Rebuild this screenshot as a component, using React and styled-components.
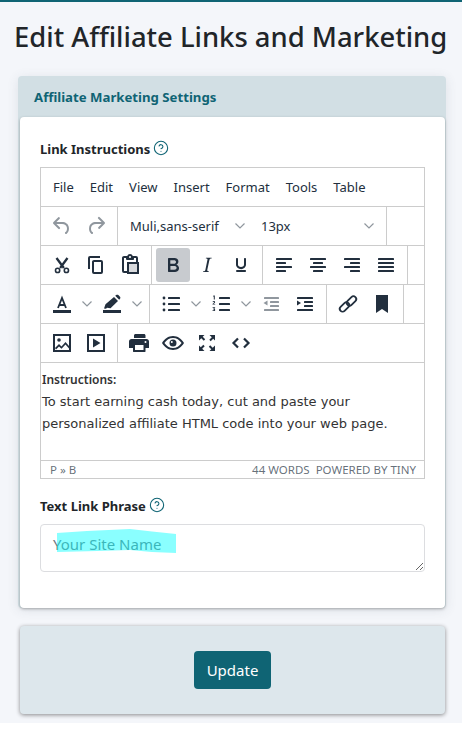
import React from "react";
import styled, { createGlobalStyle } from "styled-components";
import { CircleHelp } from "lucide-react";

const teal = "#0f6474";
const ink = "#222f3e";
const line = "#cccccc";

const GlobalStyle = createGlobalStyle`
  html, body {
    margin: 0;
    padding: 0;
    background: #fff;
    font-family: "Noto Sans", "Open Sans", sans-serif;
    overflow: hidden;
  }
  * {
    box-sizing: border-box;
  }
`;

/* tinymce style icons, all on a 24 box */
const bars = rows =>
  rows.map(([x, y, w]) => (
    <rect key={`${x}-${y}`} x={x} y={y} width={w} height="2" rx="0.6" />
  ));

const icons = {
  undo: (
    <path d="M6.4 8H12c3.7 0 6.2 2 6.8 5.1.6 2.7-.4 5.6-2.3 6.8a1 1 0 0 1-1-1.8c1.1-.6 1.8-2.7 1.4-4.6-.5-2.1-2.1-3.5-4.9-3.5H6.4l3.3 3.3a1 1 0 1 1-1.4 1.4l-5-5a1 1 0 0 1 0-1.4l5-5a1 1 0 0 1 1.4 1.4L6.4 8z" />
  ),
  redo: (
    <path d="M17.6 10H12c-2.8 0-4.4 1.4-4.9 3.5-.4 2 .3 4 1.4 4.6a1 1 0 1 1-1 1.8c-2-1.2-2.9-4.1-2.3-6.8.6-3 3-5.1 6.8-5.1h5.6l-3.3-3.3a1 1 0 1 1 1.4-1.4l5 5a1 1 0 0 1 0 1.4l-5 5a1 1 0 0 1-1.4-1.4l3.3-3.3z" />
  ),
  cut: (
    <>
      <g fill="none" stroke="currentColor" strokeWidth="1.6">
        <circle cx="7.6" cy="17.4" r="2.1" />
        <circle cx="16.4" cy="17.4" r="2.1" />
      </g>
      <path
        d="M6.5 5l7.400 10M17.500 5l-7.400 10"
        fill="none"
        stroke="currentColor"
        strokeWidth="2.300"
      />
    </>
  ),
  copy: (
    <path d="M16 3H6a2 2 0 0 0-2 2v11h2V5h10V3zm1 4a2 2 0 0 1 2 2v10a2 2 0 0 1-2 2h-7a2 2 0 0 1-2-2V9c0-1.2.9-2 2-2h7zm0 12V9h-7v10h7z" />
  ),
  paste: (
    <>
      <rect x="11" y="11" width="8" height="8" opacity="0.18" />
      <path
        fillRule="evenodd"
        d="M18 9V5h-2v1c0 .6-.4 1-1 1H9a1 1 0 0 1-1-1V5H6v13h3V9h9zM9 20H6a2 2 0 0 1-2-2V5c0-1.1.9-2 2-2h3.2A3 3 0 0 1 12 1a3 3 0 0 1 2.8 2H18a2 2 0 0 1 2 2v4h1v12H9v-1zm2-9v8h8v-8h-8zM12 3a1 1 0 0 0-1 1c0 .5.4 1 1 1s1-.5 1-1-.4-1-1-1z"
      />
    </>
  ),
  bold: (
    <path d="M7.8 19c-.3 0-.5 0-.6-.2l-.2-.5V5.7c0-.2 0-.4.2-.5l.6-.2h5c1.5 0 2.7.3 3.5 1 .7.6 1.1 1.4 1.1 2.5a3 3 0 0 1-.6 1.9c-.4.6-1 1-1.6 1.2.4.1.9.3 1.3.6s.8.7 1 1.2c.4.4.5 1 .5 1.6 0 1.3-.4 2.3-1.3 3-.8.7-2.1 1-3.8 1H7.8zm5-8.3c.6 0 1.2-.1 1.6-.5.4-.3.6-.7.6-1.3 0-1.1-.8-1.7-2.3-1.7H9.3v3.5h3.4zm.5 6c.7 0 1.3-.1 1.7-.4.4-.4.6-.9.6-1.5s-.2-1-.7-1.4c-.4-.3-1-.4-2-.4H9.4v3.8h4z" />
  ),
  italic: (
    <path d="M16.7 4.7l-.1.9h-.3c-.6 0-1 0-1.4.3-.3.3-.4.6-.5 1.1l-2.1 9.8v.6c0 .5.4.8 1.4.8h.2l-.2.8H8l.2-.8h.2c1.1 0 1.8-.5 2-1.5l2-9.8.1-.5c0-.6-.4-.8-1.4-.8h-.3l.2-.9h5.800z" />
  ),
  underline: (
    <path d="M16 5c.6 0 1 .4 1 1v5.5a4 4 0 0 1-.4 1.8l-1 1.4a5.3 5.3 0 0 1-5.5 1 5 5 0 0 1-1.6-1c-.5-.4-.8-.9-1.1-1.4a4 4 0 0 1-.4-1.8V6c0-.6.4-1 1-1s1 .4 1 1v5.5c0 .3 0 .6.2 1l.6.7a3.3 3.3 0 0 0 2.2.8 3.4 3.4 0 0 0 2.2-.8c.3-.2.4-.5.6-.8l.2-.9V6c0-.6.4-1 1-1zM8 17h8c.6 0 1 .4 1 1s-.4 1-1 1H8a1 1 0 0 1 0-2z" />
  ),
  alignLeft: bars([[4, 5, 16], [4, 9, 10], [4, 13, 16], [4, 17, 10]]),
  alignCenter: bars([[4, 5, 16], [7, 9, 10], [4, 13, 16], [7, 17, 10]]),
  alignRight: bars([[4, 5, 16], [10, 9, 10], [4, 13, 16], [10, 17, 10]]),
  justify: bars([[4, 5, 16], [4, 9, 16], [4, 13, 16], [4, 17, 16]]),
  textColor: (
    <>
      <path d="M3 18h18v3H3z" />
      <path
        d="M8 16l4-10 4 10M9.400 13h5.200"
        fill="none"
        stroke="currentColor"
        strokeWidth="1.800"
      />
    </>
  ),
  highlight: (
    <>
      <path d="M3 18h18v3H3z" />
      <path d="M4 16.500l1.500-4.300L14 5l4 4-7.500 7.200-3.500-.500-1 1zM15.200 3.800l1-.8c.7-.5 1.500-.5 2.100 0l1.700 1.700c.5.600.5 1.400 0 2l-.8 1-4-3.900z" />
    </>
  ),
  bullist: (
    <>
      {bars([[9, 5, 12], [9, 11, 12], [9, 17, 12]])}
      <circle cx="5" cy="6" r="1.400" />
      <circle cx="5" cy="12" r="1.400" />
      <circle cx="5" cy="18" r="1.400" />
    </>
  ),
  numlist: (
    <>
      {bars([[10, 5, 11], [10, 11, 11], [10, 17, 11]])}
      <path d="M4.500 3.500h1.300v4H4.800V4.600l-.6.200v-.8zM3.500 10c.2-.6.700-.9 1.300-.9.800 0 1.300.4 1.300 1.100 0 .5-.3.9-1 1.400l-.4.300H6.200v.7H3.500v-.7l1.200-1c.4-.3.500-.5.500-.7 0-.2-.2-.4-.4-.4s-.4.200-.5.500l-.8-.3zM3.600 15.300h2.500v.6l-.9.900c.6.100 1 .5 1 1.100 0 .8-.6 1.200-1.400 1.200-.6 0-1.100-.2-1.400-.6l.5-.6c.2.300.5.400.8.400.3 0 .5-.1.500-.4s-.2-.4-.6-.4h-.4v-.6l.8-.8H3.600v-.8z" />
    </>
  ),
  outdent: (
    <>
      {bars([[5, 5, 15], [11, 9, 9], [11, 13, 9], [5, 17, 15]])}
      <path d="M8.500 8.500v5L4.500 11z" />
    </>
  ),
  indent: (
    <>
      {bars([[4, 5, 16], [11, 9, 9], [11, 13, 9], [4, 17, 16]])}
      <path d="M4 8.500v5l4-2.500z" />
    </>
  ),
  link: (
    <g fill="none" stroke="currentColor" strokeWidth="1.800">
      <rect x="3" y="12.200" width="11" height="5.600" rx="2.800" transform="rotate(-45 8.500 15)" />
      <rect x="10" y="6.200" width="11" height="5.600" rx="2.800" transform="rotate(-45 15.500 9)" />
    </g>
  ),
  bookmark: <path d="M6 3h12v18l-6-4-6 4z" />,
  image: (
    <>
      <path fillRule="evenodd" d="M3 3h18v18H3V3zm2 2v14h14V5H5z" />
      <circle cx="9" cy="9" r="1.800" />
      <path d="M5 17l4-4 2.500 2.500L15.500 11 19 15v2.500l-3.500-4-4 4.300-2.500-2.300-3 3z" />
    </>
  ),
  media: (
    <path
      fillRule="evenodd"
      d="M3 3h18v18H3V3zm2 2v14h14V5H5zm4 2.500l7.500 4.500L9 16.500v-9z"
    />
  ),
  print: (
    <path
      fillRule="evenodd"
      d="M7 4.500C7 3.700 7.700 3 8.500 3h8.500c.8 0 1.500.7 1.500 1.500V7H7V4.500zM4.500 8h15c1.400 0 2.500 1.100 2.500 2.500V17h-3.500v3.500c0 .3-.2.500-.5.500H6.500c-.3 0-.5-.2-.5-.5V17H2v-6.500C2 9.100 3.100 8 4.500 8zM8 14v5h8.500v-5H8zm10.500-4a1 1 0 1 0 0 2 1 1 0 0 0 0-2z"
    />
  ),
  preview: (
    <path
      fillRule="evenodd"
      d="M12 5c4.600 0 8.600 2.800 11 7-2.400 4.200-6.400 7-11 7S3.400 16.200 1 12c2.400-4.200 6.400-7 11-7zm0 2c-3.400 0-6.500 1.900-8.600 5 2.100 3.100 5.200 5 8.600 5s6.500-1.900 8.600-5c-2.100-3.100-5.200-5-8.600-5zm0 1.500a3.500 3.500 0 1 1 0 7 3.500 3.500 0 0 1 0-7zm-1.200 1.500a1 1 0 1 0 0 2 1 1 0 0 0 0-2z"
    />
  ),
  fullscreen: (
    <path d="M4 4h5.500L7.700 5.800l2.500 2.500-1.400 1.400-2.500-2.500L4 9.500V4zm16 0v5.500l-1.800-1.800-2.500 2.500-1.400-1.400 2.500-2.500L14.500 4H20zM4 20v-5.500l1.800 1.800 2.500-2.500 1.400 1.400-2.500 2.500L9.500 20H4zm16 0h-5.500l1.800-1.800-2.500-2.500 1.400-1.400 2.500 2.500 2.300-2.300V20z" />
  ),
  code: (
    <g fill="none" stroke="currentColor" strokeWidth="2.200">
      <path d="M9 7.500L4.500 12 9 16.500M15 7.500l4.500 4.500-4.500 4.500" />
    </g>
  )
};

const toolbarRows = [
  [
    [{ icon: "cut" }, { icon: "copy" }, { icon: "paste" }],
    [{ icon: "bold", active: true }, { icon: "italic" }, { icon: "underline" }],
    [{ icon: "alignLeft" }, { icon: "alignCenter" }, { icon: "alignRight" }, { icon: "justify" }]
  ],
  [
    [{ icon: "textColor", split: true }, { icon: "highlight", split: true }],
    [
      { icon: "bullist", split: true },
      { icon: "numlist", split: true },
      { icon: "outdent", disabled: true },
      { icon: "indent" }
    ],
    [{ icon: "link" }, { icon: "bookmark" }]
  ],
  [
    [{ icon: "image" }, { icon: "media" }],
    [{ icon: "print" }, { icon: "preview" }, { icon: "fullscreen" }, { icon: "code" }]
  ]
];

const Chevron = () => (
  <ChevronSvg viewBox="0 0 10 10">
    <path d="M0.500 2.500L5 7l4.500-4.500" fill="none" stroke="currentColor" strokeWidth="1.200" />
  </ChevronSvg>
);

const ToolIcon = ({ name, disabled, active }) => (
  <ToolButton $disabled={disabled} $active={active}>
    <svg viewBox="0 0 24 24" width="24" height="24" fill="currentColor">
      {icons[name]}
    </svg>
  </ToolButton>
);

const Help = () => (
  <HelpIcon>
    <CircleHelp size={16} strokeWidth={1.6} />
  </HelpIcon>
);

export default function App() {
  return (
    <>
      <GlobalStyle />
      <Page>
        <Title>Edit Affiliate Links and Marketing</Title>
        <SettingsCard>
          <CardHeader>Affiliate Marketing Settings</CardHeader>
          <CardBody>
            <FieldLabel>
              Link Instructions <Help />
            </FieldLabel>
            <Editor>
              <MenuBar>
                {["File", "Edit", "View", "Insert", "Format", "Tools", "Table"].map(item => (
                  <MenuItem key={item}>{item}</MenuItem>
                ))}
              </MenuBar>
              <ToolRow>
                <ToolGroup>
                  <ToolIcon name="undo" disabled />
                  <ToolIcon name="redo" disabled />
                </ToolGroup>
                <ToolGroup>
                  <SelectButton $width={131}>
                    Muli,sans-serif
                    <Chevron />
                  </SelectButton>
                  <SelectButton $width={129}>
                    13px
                    <Chevron />
                  </SelectButton>
                </ToolGroup>
              </ToolRow>
              {toolbarRows.map((groups, rowIndex) => (
                <ToolRow key={rowIndex}>
                  {groups.map((tools, groupIndex) => (
                    <ToolGroup
                      key={groupIndex}
                      $open={rowIndex === 2 && groupIndex === groups.length - 1}
                    >
                      {tools.map(tool => (
                        <React.Fragment key={tool.icon}>
                          <ToolIcon name={tool.icon} disabled={tool.disabled} active={tool.active} />
                          {tool.split && (
                            <SplitArrow>
                              <Chevron />
                            </SplitArrow>
                          )}
                        </React.Fragment>
                      ))}
                    </ToolGroup>
                  ))}
                </ToolRow>
              ))}
              <EditorContent>
                <strong>Instructions:</strong>
                <br />
                To start earning cash today, cut and paste your personalized affiliate HTML code
                into your web page.
              </EditorContent>
              <StatusBar>
                <Path>P » B</Path>
                <span>44 words &nbsp;Powered by Tiny</span>
              </StatusBar>
            </Editor>
            <PhraseLabel>
              Text Link Phrase <Help />
            </PhraseLabel>
            <PhraseWrap>
              <PhraseInput placeholder="Your Site Name" />
              <MarkerStroke viewBox="0 0 120 25" width="120" height="25" preserveAspectRatio="none">
                <path d="M0 4L30 2L73 0L95 2.500L119 5L119 24L95 23L73 21L40 22L20 22.500L0 23Z" />
              </MarkerStroke>
            </PhraseWrap>
          </CardBody>
        </SettingsCard>
        <ActionCard>
          <UpdateButton>Update</UpdateButton>
        </ActionCard>
      </Page>
    </>
  );
}

const Page = styled.div`
  width: 462px;
  height: 723px;
  background: #f4f6fa;
  border-top: 2px solid ${teal};
  padding: 0 16px 0 18px;
  display: flex;
  flex-direction: column;
  align-items: stretch;
`;

const Title = styled.h1`
  margin: 17px -8px 0 -4px;
  font-family: "Noto Sans", sans-serif;
  font-size: 27.4px;
  line-height: 36px;
  font-weight: 500;
  color: #212529;
  white-space: nowrap;
`;

const SettingsCard = styled.section`
  margin-top: 21px;
  width: 428px;
  border-radius: 4px;
  background: #d2dfe4;
  box-shadow: 0 2px 12px rgba(60, 70, 90, 0.12);
`;

const CardHeader = styled.header`
  height: 41px;
  padding-left: 16px;
  display: flex;
  align-items: center;
  font-size: 13.2px;
  font-weight: 700;
  color: ${teal};
`;

const CardBody = styled.div`
  margin: 0 1px 0 2px;
  height: 491px;
  padding: 22px 20px 0;
  background: #fff;
  border-radius: 4px;
  box-shadow: 0 1px 3px rgba(0, 0, 0, 0.3);
`;

const FieldLabel = styled.label`
  display: flex;
  align-items: center;
  gap: 3px;
  height: 20px;
  font-size: 13px;
  font-weight: 700;
  color: #212529;
`;

const PhraseLabel = styled(FieldLabel)`
  margin-top: 17px;
`;

const HelpIcon = styled.span`
  display: inline-flex;
  color: ${teal};
  margin-top: -2px;
`;

const Editor = styled.div`
  margin-top: 8px;
  height: 312px;
  border: 1px solid ${line};
  display: flex;
  flex-direction: column;
  color: ${ink};
`;

const MenuBar = styled.div`
  height: 39px;
  padding-left: 4px;
  border-bottom: 1px solid ${line};
  display: flex;
  align-items: center;
`;

const MenuItem = styled.span`
  padding: 0 8px;
  font-size: 13px;
  color: ${ink};
`;

const ToolRow = styled.div`
  height: 39px;
  flex: none;
  border-bottom: 1px solid ${line};
  display: flex;
`;

const ToolGroup = styled.div`
  padding: 0 4px;
  border-right: ${({ $open }) => ($open ? "0" : `1px solid ${line}`)};
  display: flex;
  align-items: center;
`;

const ToolButton = styled.span`
  width: 34px;
  height: 34px;
  display: flex;
  align-items: center;
  justify-content: center;
  border-radius: 3px;
  color: ${({ $disabled }) => ($disabled ? "rgba(34, 47, 62, 0.5)" : ink)};
  background: ${({ $active }) => ($active ? "#c8cbcf" : "transparent")};
`;

const SplitArrow = styled.span`
  width: 16px;
  height: 34px;
  display: flex;
  align-items: center;
  justify-content: center;
`;

const ChevronSvg = styled.svg`
  width: 10px;
  height: 10px;
  color: rgba(34, 47, 62, 0.5);
`;

const SelectButton = styled.span`
  width: ${({ $width }) => $width}px;
  height: 34px;
  padding: 0 8px;
  display: flex;
  align-items: center;
  justify-content: space-between;
  font-size: 13px;
  color: ${ink};
`;

const EditorContent = styled.div`
  flex: 1;
  padding: 6px 30px 0 1px;
  font-family: "DejaVu Sans", sans-serif;
  font-size: 13px;
  line-height: 22px;
  color: #333;

  strong {
    font-family: "Noto Sans", sans-serif;
    font-size: 12px;
    font-weight: 600;
  }
`;

const StatusBar = styled.footer`
  height: 18px;
  flex: none;
  padding: 0 8px;
  border-top: 1px solid ${line};
  display: flex;
  align-items: center;
  justify-content: space-between;
  font-size: 11.5px;
  text-transform: uppercase;
  color: rgba(34, 47, 62, 0.7);
`;

const Path = styled.span`
  text-transform: none;
  padding-left: 1px;
`;

const PhraseWrap = styled.div`
  position: relative;
  margin-top: 8px;
  height: 48px;
`;

const PhraseInput = styled.textarea`
  display: block;
  width: 100%;
  height: 100%;
  margin: 0;
  padding: 8px 12px;
  border: 1px solid #dcdde0;
  border-radius: 4px;
  outline: none;
  font-family: "Noto Sans", sans-serif;
  font-size: 15px;
  line-height: 22px;

  &::placeholder {
    color: #6c757d;
    opacity: 1;
  }
`;

/* the hand painted marker swipe over the placeholder */
const MarkerStroke = styled.svg`
  position: absolute;
  left: 17px;
  top: 5px;
  pointer-events: none;

  path {
    fill: rgba(6, 255, 255, 0.47);
  }
`;

const ActionCard = styled.section`
  margin: 18px 0 0 2px;
  height: 88px;
  width: 425px;
  border-radius: 4px;
  background: #dde7ec;
  box-shadow: 0 1px 4px rgba(0, 0, 0, 0.45);
  display: flex;
  align-items: center;
  justify-content: center;
`;

const UpdateButton = styled.button`
  width: 77px;
  height: 38px;
  border: 0;
  border-radius: 4px;
  background: ${teal};
  color: #fff;
  font-family: "Noto Sans", sans-serif;
  font-size: 15px;
`;
